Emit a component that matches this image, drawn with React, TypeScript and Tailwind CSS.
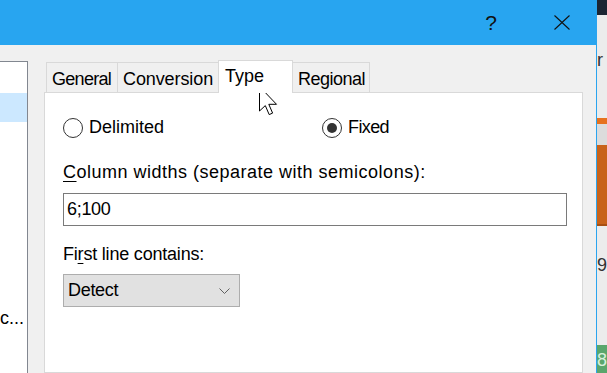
import { useState } from "react";

const tabs = [
  { name: "General", w: "w-[72px]", track: "tracking-[-0.7px]" },
  { name: "Conversion", w: "w-[102px]", track: "tracking-[-0.1px]" },
  { name: "Type", w: "w-[75px]", track: "" },
  { name: "Regional", w: "w-[78px]", track: "tracking-[-0.5px]" },
];

function Radio({ checked }: { checked?: boolean }) {
  return (
    <span className="w-[20px] h-[20px] rounded-full border border-[#333333] bg-white flex items-center justify-center">
      {checked && <span className="w-[10px] h-[10px] rounded-full bg-[#333333]" />}
    </span>
  );
}

function Cursor() {
  return (
    <svg width="20" height="32" viewBox="0 0 20 32" className="absolute left-[259px] top-[86px]">
      <path
        d="M0.5 0.5 L0.5 25 L6.3 19.6 L10.2 28.6 L13.6 27.1 L9.8 18.3 L17.5 18.3 Z"
        fill="white"
        stroke="black"
        strokeWidth="1"
        strokeLinejoin="miter"
      />
    </svg>
  );
}

export default function App() {
  const [active, setActive] = useState("Type");
  const [fixed, setFixed] = useState(true);

  return (
    <div className="relative w-[607px] h-[373px] overflow-hidden flex font-['Segoe_UI','Liberation_Sans',sans-serif] text-[18px] text-black">
      {/* dialog */}
      <div className="w-[601px] flex flex-col border-r border-[#2aa4ef]">
        <div className="h-[45px] shrink-0 bg-[#28a5f0] flex items-center justify-end">
          <span className="text-[21px] leading-none mr-[57px] mb-[1px] text-[#111]">?</span>
          <svg width="16" height="15" viewBox="0 0 16 15" className="mr-[26px]">
            <path d="M0.5 0.5 L15.5 14.5 M15.5 0.5 L0.5 14.5" stroke="#111" strokeWidth="1.1" fill="none" />
          </svg>
        </div>

        <div className="flex-1 bg-[#f0f0f0] flex">
          {/* list on the left */}
          <div className="w-[28px] mt-[16px] bg-white border-t border-r border-[#828790] flex flex-col">
            <div className="h-[31px]" />
            <div className="h-[29px] bg-[#cce8ff]" />
            <div className="h-[182px]" />
            <div className="h-[29px] flex items-center whitespace-nowrap overflow-hidden">c...</div>
          </div>

          {/* tab control */}
          <div className="ml-[16px] mt-[15px] w-[539px] flex flex-col">
            <div className="flex items-end pl-[2px] h-[32px]">
              {tabs.map((t, i) => {
                const sel = t.name === active;
                return (
                  <button
                    key={t.name}
                    onClick={() => setActive(t.name)}
                    className={
                      t.w +
                      " " +
                      t.track +
                      (i > 0 ? " -ml-px" : "") +
                      (sel
                        ? " relative z-10 h-[33px] -mb-px bg-white pb-[2px] pl-[6px]"
                        : " h-[30px] bg-[#f0f0f0] pt-[3px] pl-[5px]") +
                      " border border-b-0 border-[#d9d9d9] flex items-center leading-none"
                    }
                  >
                    {t.name}
                  </button>
                );
              })}
            </div>
            <div className="flex-1 bg-white border border-[#d9d9d9] pl-[18px] pt-[24px]">
              <div className="flex items-center h-[21px]">
                <button onClick={() => setFixed(false)} className="w-[259px] flex items-center gap-[6px]">
                  <Radio checked={!fixed} />
                  <span>Delimited</span>
                </button>
                <button onClick={() => setFixed(true)} className="flex items-center gap-[6px]">
                  <Radio checked={fixed} />
                  <span className="tracking-[-0.6px]">Fixed</span>
                </button>
              </div>

              <div className="mt-[22px] h-[24px] leading-[24px] tracking-[0.5px]">
                <span className="underline underline-offset-[3px]">C</span>olumn widths (separate with semicolons):
              </div>
              <div className="mt-[9px] w-[504px] h-[33px] border border-[#7a7a7a] flex items-center pl-[3px] tracking-[-0.3px]">
                6;100
              </div>

              <div className="mt-[16px] h-[24px] leading-[24px] tracking-[-0.2px]">
                Fi<span className="underline underline-offset-[3px]">r</span>st line contains:
              </div>
              <div className="mt-[8px] w-[177px] h-[33px] border border-[#adadad] bg-[#e1e1e1] flex items-center justify-between pl-[4px] pr-[9px]">
                <span className="tracking-[-0.3px]">Detect</span>
                <svg width="11" height="6" viewBox="0 0 11 6">
                  <path d="M0.5 0.5 L5.5 5.5 L10.5 0.5" stroke="#606060" strokeWidth="1" fill="none" />
                </svg>
              </div>
            </div>
          </div>
        </div>
      </div>

      {/* window behind, at the right edge */}
      <div className="flex-1 flex flex-col bg-[#ececec]">
        <div className="h-[15px] bg-[#1b2533]" />
        <div className="h-[103px] pt-[36px] leading-none text-[#333] overflow-hidden">r</div>
        <div className="h-[6px] bg-[#e6721f]" />
        <div className="h-[21px] bg-[#dcdcdc]" />
        <div className="h-[81px] bg-[#c8621a] border-b-2 border-[#a84f12]" />
        <div className="h-[119px] pt-[30px] leading-none text-[#333] overflow-hidden">9</div>
        <div className="flex-1 bg-[#5aa66c] leading-none text-[#d8f0dc] pt-[6px] overflow-hidden">8</div>
      </div>

      <Cursor />
    </div>
  );
}
